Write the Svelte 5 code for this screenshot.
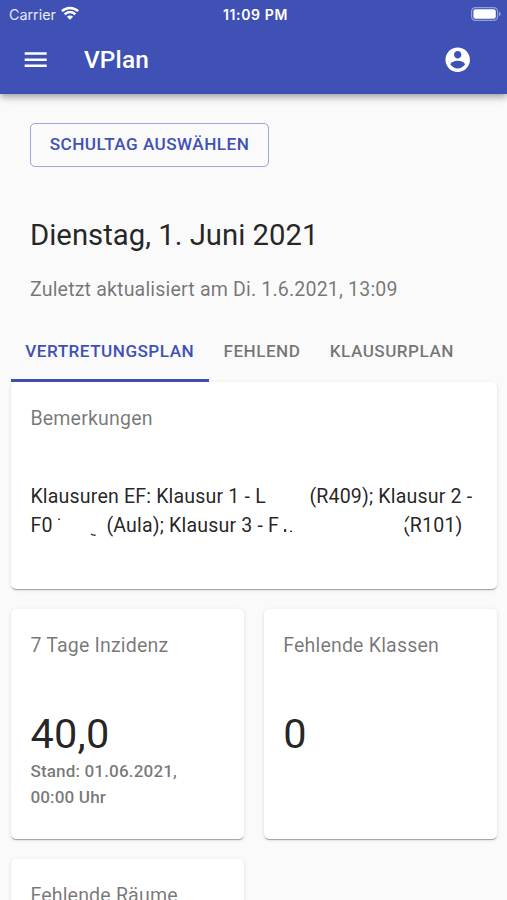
<script>
  const tabs = ['Vertretungsplan', 'Fehlend', 'Klausurplan'];
  let active = $state(0);
</script>

<div class="screen">
  <header>
    <div class="status">
      <div class="carrier">
        <span>Carrier</span>
        <svg width="18" height="14" viewBox="0 0 18 14" fill="none" stroke="#fff" stroke-width="2.5">
          <path d="M.9 5.2a11.6 11.6 0 0 1 16.2 0" />
          <path d="M3.7 8.4a7.3 7.3 0 0 1 10.6 0" />
          <path d="M9 13.8 5.9 10.8a4.4 4.4 0 0 1 6.2 0z" fill="#fff" stroke="none" />
        </svg>
      </div>
      <span class="time">11:09 PM</span>
      <div class="battery">
        <svg width="31" height="14" viewBox="0 0 31 14">
          <rect x=".6" y=".6" width="26" height="12.8" rx="3.8" fill="none" stroke="#fff" stroke-opacity=".45" stroke-width="1.2" />
          <rect x="2.4" y="2.2" width="22.4" height="9.6" rx="2.2" fill="#fff" />
          <path d="M28.1 4.8c2.2.7 2.2 3.7 0 4.4z" fill="#fff" fill-opacity=".5" />
        </svg>
      </div>
    </div>
    <div class="toolbar">
      <svg class="icon" viewBox="0 0 24 24"><path d="M3 18h18v-2H3v2zm0-5h18v-2H3v2zm0-7v2h18V6H3z" /></svg>
      <h1>VPlan</h1>
      <svg class="icon" viewBox="0 0 24 24"><path d="M12 2C6.48 2 2 6.48 2 12s4.48 10 10 10 10-4.48 10-10S17.52 2 12 2zm0 3c1.66 0 3 1.34 3 3s-1.34 3-3 3-3-1.34-3-3 1.34-3 3-3zm0 14.2c-2.5 0-4.71-1.28-6-3.22.03-1.99 4-3.08 6-3.08 1.99 0 5.97 1.09 6 3.08-1.29 1.94-3.5 3.22-6 3.22z" /></svg>
    </div>
  </header>

  <section class="intro">
    <button class="choose">Schultag auswählen</button>
    <h2>Dienstag, 1. Juni 2021</h2>
    <p class="updated">Zuletzt aktualisiert am Di. 1.6.2021, 13:09</p>
  </section>

  <nav>
    {#each tabs as tab, i}
      <button class="tab" class:active={active === i} onclick={() => (active = i)}>{tab}</button>
    {/each}
  </nav>

  <main>
    <article class="card wide">
      <h3>Bemerkungen</h3>
      <div class="remarks">
        <div class="line">
          <span class="first">Klausuren EF: Klausur 1 - L</span>
          <span>(R409); Klausur 2 -</span>
        </div>
        <div class="line">
          <span class="room">F0</span>
          <svg class="marks" width="40" height="20" viewBox="0 0 40 20" fill="none" stroke="#333" stroke-width="1.4">
            <path d="M1.2 2.6 3 1.8" />
            <path d="M34 17.2c1.3.9 2.6 1.1 4.6 1" />
          </svg>
          <span class="second">(Aula); Klausur 3 - F</span>
          <svg class="dots" width="10" height="4" viewBox="0 0 10 4" fill="#333">
            <rect x="0" y="0" width="2.2" height="3" rx=".6" />
            <rect x="6.2" y="1.4" width="1.8" height="1.6" rx=".5" />
          </svg>
          <span><span class="broken">(</span>R101)</span>
        </div>
      </div>
    </article>

    <article class="card">
      <h3>7 Tage Inzidenz</h3>
      <div class="value">40,0</div>
      <p class="asof">Stand: 01.06.2021,<br />00:00 Uhr</p>
    </article>

    <article class="card">
      <h3>Fehlende Klassen</h3>
      <div class="value">0</div>
    </article>

    <article class="card">
      <h3>Fehlende Räume</h3>
    </article>
  </main>
</div>

<style>
  :global(body) {
    margin: 0;
    background: #fafafa;
  }
  .screen {
    width: 507px;
    height: 900px;
    overflow: hidden;
    background: #fafafa;
    color: rgba(0, 0, 0, 0.87);
    font-family: Roboto, sans-serif;
    font-size: 19.57px;
    letter-spacing: 0.0088em;
  }
  h1, h2, h3, p { margin: 0; font-weight: 400; }
  button {
    background: none;
    font: 500 17.14px/30px Roboto, sans-serif;
    letter-spacing: 0.028em;
    text-transform: uppercase;
    box-sizing: border-box;
  }
  header {
    position: relative;
    height: 94px;
    background: #3f51b5;
    color: #fff;
    box-shadow: 0 2px 5px -1px rgba(0, 0, 0, 0.2), 0 5px 6px rgba(0, 0, 0, 0.14), 0 1px 12px rgba(0, 0, 0, 0.12);
  }
  .status {
    display: grid;
    grid-template-columns: 1fr auto 1fr;
    align-items: center;
    height: 27px;
    padding: 0 6px 0 9px;
    font: 14.3px/27px Inter, sans-serif;
    letter-spacing: 0;
  }
  .carrier { display: flex; align-items: center; gap: 6px; }
  .carrier span { margin-top: 1px; opacity: 0.88; }
  .carrier svg { margin: -2px 0 0 -1px; }
  .time { margin-right: -1px; font-weight: 600; font-size: 14px; letter-spacing: 0.045em; }
  .battery { display: flex; justify-content: flex-end; margin: -1px -0.5px 0 0; }
  .toolbar {
    display: flex;
    align-items: center;
    height: 65px;
    padding: 0 34.3px 0 20.5px;
  }
  .icon { width: 29.4px; height: 29.4px; fill: #fff; }
  h1 {
    flex: 1;
    margin-left: 34.1px;
    font-size: 24.4px;
    font-weight: 500;
    letter-spacing: 0.005em;
  }
  .intro { padding: 29px 30px 0; }
  .choose {
    display: block;
    height: 44px;
    width: 239px;
    padding: 0 0 2px;
    border: 1.2px solid rgba(63, 81, 181, 0.5);
    border-radius: 5px;
    color: #3f51b5;
  }
  h2 {
    margin-top: 48px;
    font-size: 29.3px;
    line-height: 40px;
    letter-spacing: 0;
  }
  .updated {
    margin-top: 20px;
    line-height: 29px;
    color: rgba(0, 0, 0, 0.54);
  }
  nav {
    display: flex;
    height: 60px;
    margin: 18px 0 0 10.6px;
  }
  .tab {
    height: 60px;
    padding: 1px 14.7px 0;
    border: 0;
    border-bottom: 3px solid transparent;
    color: rgba(0, 0, 0, 0.54);
  }
  .tab.active { color: #3f51b5; border-color: #3f51b5; }
  main {
    display: grid;
    grid-template-columns: 1fr 1fr;
    grid-template-rows: 207px 230px 230px;
    gap: 20px 19.6px;
    padding: 0 10px 0 11px;
  }
  .card {
    padding: 21px 19.4px;
    box-sizing: border-box;
    border-radius: 5px;
    background: #fff;
    box-shadow: 0 2px 1px -1px rgba(0, 0, 0, 0.2), 0 1px 1px rgba(0, 0, 0, 0.14), 0 1px 4px rgba(0, 0, 0, 0.1);
  }
  .wide { grid-column: 1 / 3; }
  h3 {
    font-size: 19.57px;
    line-height: 31px;
    color: rgba(0, 0, 0, 0.54);
  }
  .remarks { margin-top: 48px; line-height: 29.4px; white-space: nowrap; }
  .line { display: flex; height: 29.4px; }
  .first { width: 279px; }
  .room { width: 27px; }
  .marks { margin: 6px 9px 0 0; }
  .second { width: 178px; }
  .dots { margin: 18px 108.6px 0 0; }
  .broken { position: relative; }
  .broken::after {
    content: '';
    position: absolute;
    left: 0;
    top: 8px;
    width: 5px;
    height: 5px;
    background: #fff;
    transform: rotate(-20deg);
  }
  .value {
    margin-top: 47px;
    font-size: 41.5px;
    line-height: 51.4px;
    letter-spacing: 0.006em;
  }
  .asof {
    font-size: 17.14px;
    font-weight: 500;
    line-height: 25.7px;
    letter-spacing: 0.00714em;
    color: rgba(0, 0, 0, 0.54);
  }
</style>
